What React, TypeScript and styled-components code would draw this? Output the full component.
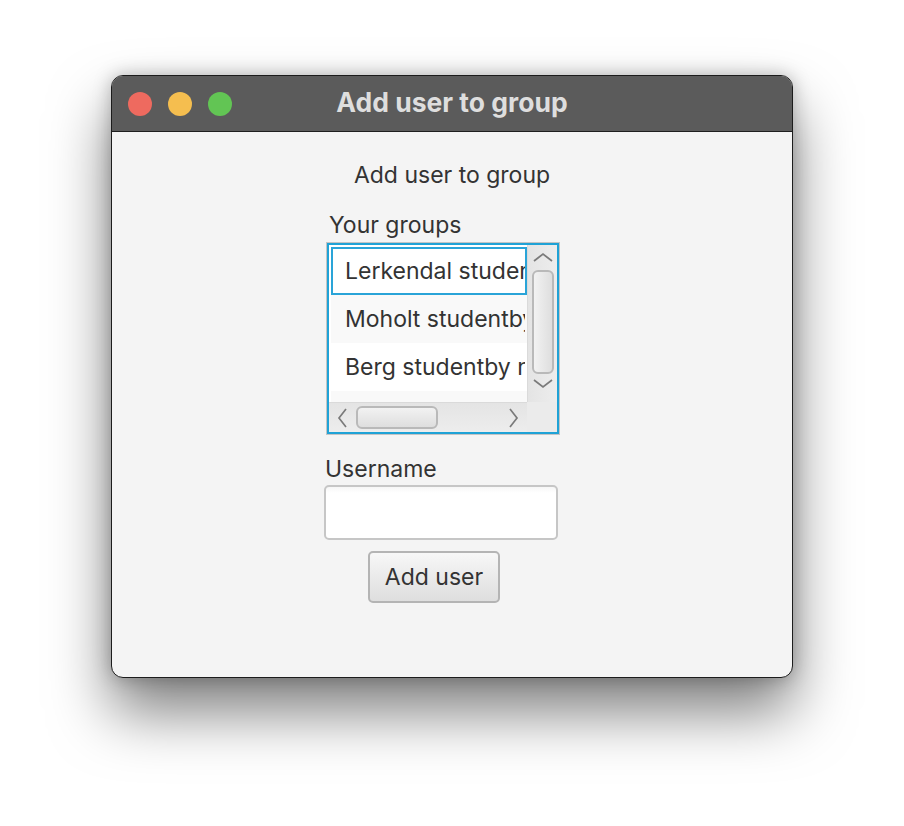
import React from "react";
import styled, { createGlobalStyle } from "styled-components";

const Global = createGlobalStyle`
  html, body { margin: 0; padding: 0; background: #ffffff; }
  body { font-family: Inter, "Noto Sans", sans-serif; }
`;

const Page = styled.div`
  width: 904px;
  height: 826px;
  padding: 75px 0 0 111px;
  box-sizing: border-box;
  overflow: hidden;
`;

const Window = styled.div`
  width: 682px;
  height: 603px;
  box-sizing: border-box;
  border: 1px solid #1c1c1c;
  border-radius: 12px;
  overflow: hidden;
  background: #f4f4f4;
  display: flex;
  flex-direction: column;
  box-shadow: 0 34px 60px rgba(0, 0, 0, 0.5), 0 0 18px rgba(0, 0, 0, 0.25);
`;

const TitleBar = styled.div`
  height: 56px;
  flex: none;
  background: #5b5b5b;
  border-bottom: 1px solid #1e1e1e;
  position: relative;
  display: flex;
  align-items: center;
  justify-content: center;
  padding-bottom: 3px;
  box-sizing: border-box;
`;

const Lights = styled.div`
  position: absolute;
  left: 16px;
  top: 16px;
  display: flex;
  gap: 16px;
`;

const Light = styled.span<{ $c: string }>`
  width: 24px;
  height: 24px;
  border-radius: 50%;
  background: ${(p) => p.$c};
`;

const TitleText = styled.div`
  font-family: Inter, "Liberation Sans", sans-serif;
  font-weight: 700;
  font-size: 26.5px;
  color: #dedede;
`;

const Content = styled.div`
  flex: 1;
  display: flex;
  flex-direction: column;
  padding-top: 29px;
`;

const Heading = styled.div`
  align-self: center;
  font-size: 23px;
  line-height: 28px;
  color: #333333;
`;

const Form = styled.div`
  margin-left: 212px;
  width: 236px;
  display: flex;
  flex-direction: column;
`;

const Label = styled.div<{ $indent: number; $top: number }>`
  margin-left: ${(p) => p.$indent}px;
  margin-top: ${(p) => p.$top}px;
  font-size: 23px;
  line-height: 28px;
  color: #333333;
`;

const ListBox = styled.div`
  margin-top: 3px;
  margin-left: 2px;
  width: 234px;
  height: 193px;
  box-sizing: border-box;
  border: 1px solid #c4c4c4;
  display: flex;
`;

const ListFocus = styled.div`
  flex: 1;
  border: 2px solid #1fa2d6;
  display: grid;
  grid-template-columns: 1fr 30px;
  grid-template-rows: 1fr 30px;
  background: #ffffff;
  overflow: hidden;
  min-width: 0;
`;

const Cells = styled.div`
  padding-top: 2px;
  overflow: hidden;
  display: flex;
  flex-direction: column;
  min-width: 0;
`;

const Cell = styled.div<{ $odd: boolean; $focused: boolean }>`
  height: 48px;
  flex: none;
  box-sizing: border-box;
  background: ${(p) => (p.$odd ? "#f9f9f9" : "#ffffff")};
  border: 2px solid ${(p) => (p.$focused ? "#2aa4d8" : "transparent")};
  margin-left: 2px;
  padding-left: 12px;
  display: flex;
  align-items: center;
  font-size: 23px;
  color: #333333;
  white-space: nowrap;
  overflow: hidden;
`;

const VBar = styled.div`
  background: linear-gradient(90deg, #e4e4e4, #ededed);
  border-left: 1px solid #dadada;
  display: flex;
  flex-direction: column;
  align-items: center;
  padding: 6px 0 4px;
`;

const HBar = styled.div`
  background: linear-gradient(180deg, #e4e4e4, #ededed);
  border-top: 1px solid #dadada;
  display: flex;
  align-items: center;
  padding: 0 6px 0 7px;
`;

const Corner = styled.div`
  background: #ebebeb;
`;

const Thumb = styled.div<{ $vertical?: boolean }>`
  box-sizing: border-box;
  border: 2px solid #b9b9b9;
  border-radius: 6px;
  background: ${(p) =>
    p.$vertical
      ? "linear-gradient(90deg, #f2f2f2, #dedede)"
      : "linear-gradient(180deg, #f2f2f2, #dedede)"};
  ${(p) =>
    p.$vertical
      ? "width: 22px; height: 104px; margin: 6px 0 4px;"
      : "width: 82px; height: 23px; margin: 0 auto 0 7px;"}
`;

const ArrowSvg = styled.svg`
  flex: none;
  display: block;
`;

const Chevron = ({ dir }: { dir: "up" | "down" | "left" | "right" }) => {
  const d = {
    up: "M1 10 L10 3 L19 10",
    down: "M1 2 L10 9 L19 2",
    left: "M10 1 L3 10 L10 19",
    right: "M2 1 L9 10 L2 19",
  }[dir];
  const vertical = dir === "up" || dir === "down";
  return (
    <ArrowSvg
      width={vertical ? 20 : 13}
      height={vertical ? 13 : 20}
      viewBox={vertical ? "0 0 20 13" : "0 0 13 20"}
    >
      <path d={d} fill="none" stroke="#7a7a7a" strokeWidth="1.7" />
    </ArrowSvg>
  );
};

const TextField = styled.input`
  margin-top: 2px;
  width: 234px;
  height: 55px;
  box-sizing: border-box;
  border: 2px solid #c6c6c6;
  border-radius: 5px;
  background: linear-gradient(180deg, #f6f6f6 0px, #ffffff 6px);
  outline: none;
  font-size: 23px;
  font-family: inherit;
  padding: 0 10px;
`;

const Button = styled.button`
  align-self: flex-start;
  margin-left: 44px;
  margin-top: 11px;
  width: 132px;
  height: 52px;
  box-sizing: border-box;
  border: 2px solid #b4b4b4;
  border-radius: 5px;
  background: linear-gradient(180deg, #f7f7f7, #dedede);
  font-family: inherit;
  font-size: 23px;
  color: #333333;
  padding: 0;
`;

const groups = ["Lerkendal studentby", "Moholt studentby", "Berg studentby nord", ""];

export default function App() {
  return (
    <>
      <Global />
      <Page>
        <Window>
          <TitleBar>
            <Lights>
              <Light $c="#ee6a5f" />
              <Light $c="#f5be4f" />
              <Light $c="#62c554" />
            </Lights>
            <TitleText>Add user to group</TitleText>
          </TitleBar>
          <Content>
            <Heading>Add user to group</Heading>
            <Form>
              <Label $indent={5} $top={22}>Your groups</Label>
              <ListBox>
                <ListFocus>
                  <Cells>
                    {groups.map((g, i) => (
                      <Cell key={i} $odd={i % 2 === 1} $focused={i === 0}>
                        {g}
                      </Cell>
                    ))}
                  </Cells>
                  <VBar>
                    <Chevron dir="up" />
                    <Thumb $vertical />
                    <Chevron dir="down" />
                  </VBar>
                  <HBar>
                    <Chevron dir="left" />
                    <Thumb />
                    <Chevron dir="right" />
                  </HBar>
                  <Corner />
                </ListFocus>
              </ListBox>
              <Label $indent={1} $top={20}>Username</Label>
              <TextField />
              <Button>Add user</Button>
            </Form>
          </Content>
        </Window>
      </Page>
    </>
  );
}
